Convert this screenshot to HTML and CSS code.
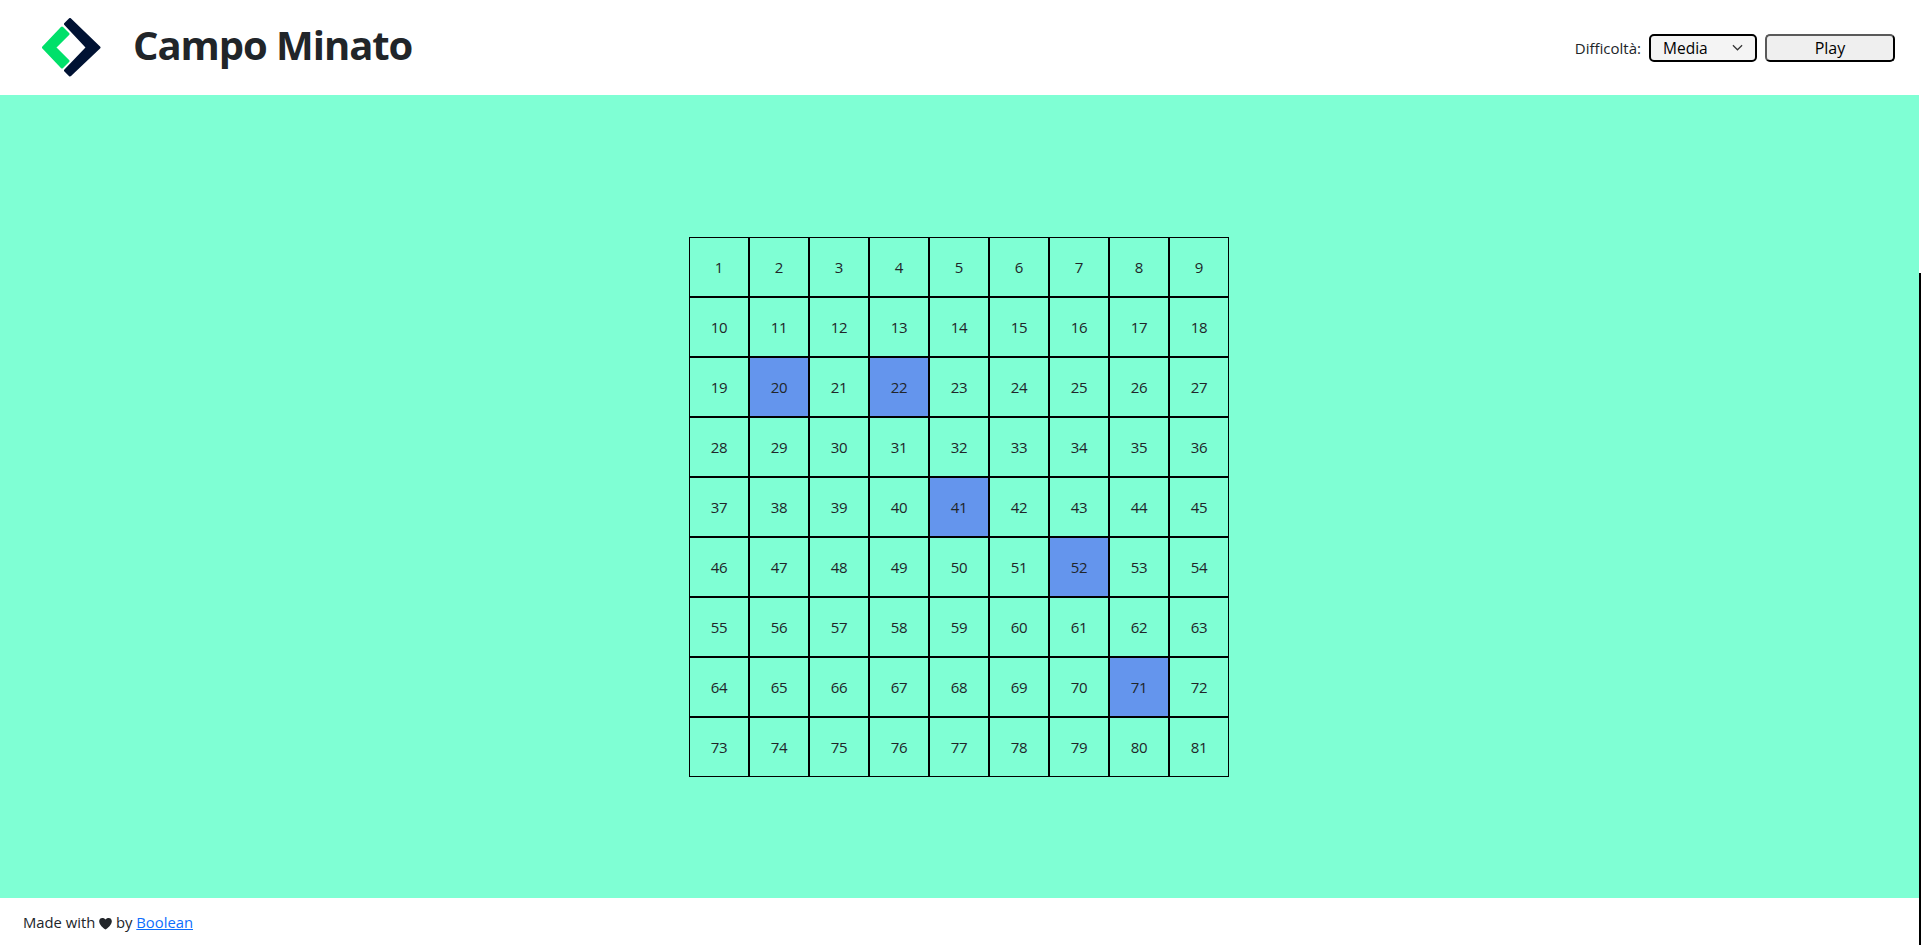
FILE: index.html
```html
<!DOCTYPE html>
<html lang="it">
<head>
<meta charset="utf-8">
<title>Campo Minato</title>
<link rel="stylesheet" href="styles.css">
</head>
<body>
<div class="page">
  <header class="header">
    <div class="brand">
      <svg class="logo" viewBox="0 0 59 59" width="59" height="59" aria-hidden="true">
        <polygon class="logo-green" points="20,10 26,16 12.5,29.5 26,43 20,49 1.5,29.5"/>
        <polygon class="logo-navy" points="28,1.5 57,29.5 28,57 23.5,52.5 45.5,29.5 23.5,6"/>
      </svg>
      <h1 class="title">Campo Minato</h1>
    </div>
    <div class="controls">
      <label class="label">Difficoltà:</label>
      <div class="select">
        <span>Media</span>
        <svg class="chevron" viewBox="0 0 12 7" width="11" height="7" aria-hidden="true"><path d="M1 1l5 5 5-5"/></svg>
      </div>
      <button class="play" type="button">Play</button>
    </div>
  </header>
  <main class="main">
    <div class="grid" id="grid"></div>
  </main>
  <footer class="footer">Made with <svg class="heart" viewBox="0 0 16 16" width="13" height="13" aria-hidden="true"><path d="M8 15.5C-6 6 2-2.500 8 3c6-5.500 14 3 0 12.500z"/></svg> by <a href="#">Boolean</a></footer>
  <div class="edge"></div>
</div>
<script src="grid.js"></script>
</body>
</html>
```
FILE: grid.js
```js
var blue = [20, 22, 41, 52, 71];
var grid = document.getElementById('grid');
for (var i = 1; i <= 81; i++) {
  var cell = document.createElement('div');
  cell.className = blue.indexOf(i) >= 0 ? 'cell cell-on' : 'cell';
  cell.textContent = i;
  grid.appendChild(cell);
}
```
FILE: styles.css
```css
* { box-sizing: border-box; }
html, body { margin: 0; height: 100%; overflow: hidden; }
body { font-family: "Open Sans", "Noto Sans", sans-serif; font-size: 16px; color: #212529; background: #fff; }
.page { position: relative; display: flex; flex-direction: column; height: 945px; width: 1921px; }
.header { height: 95px; display: flex; align-items: center; justify-content: space-between; padding: 0 26px 0 41px; }
.brand { display: flex; align-items: center; gap: 33px; }
.logo { display: block; margin: -1px 0 0 1px; }
.logo-green { fill: #00e06a; stroke: #00e06a; stroke-width: 3; stroke-linejoin: round; }
.logo-navy { fill: #001233; stroke: #001233; stroke-width: 3; stroke-linejoin: round; }
.title { margin: -6px 0 0 -1px; font-size: 40px; font-weight: 700; line-height: 48px; letter-spacing: -1.05px; }
.controls { display: flex; align-items: center; gap: 8px; font-size: 15px; }
.select { width: 108px; height: 28px; border: 2px solid #000; border-radius: 5px; background: #f4f4f4; display: flex; align-items: center; justify-content: space-between; padding: 0 12px; color: #000; font-size: 15.500px; }
.chevron path { fill: none; stroke: #333; stroke-width: 1.3; }
.play { width: 130px; height: 28px; border: 2px solid; border-color: #5a5a5a #000 #000 #5a5a5a; border-radius: 5px; background: #efefef; color: #000; font: inherit; font-size: 16px; font-weight: 500; padding: 0; }
.main { flex: 1; width: 1919px; background: #7fffd4; padding-top: 142px; display: flex; justify-content: center; align-items: flex-start; }
.grid { display: grid; grid-template-columns: repeat(9, 60px); grid-auto-rows: 60px; margin-left: -1px; }
.cell { border: 1px solid #000; display: flex; align-items: center; justify-content: center; font-size: 15px; letter-spacing: -0.3px; }
.cell-on { background: #6495ed; }
.footer { height: 47px; width: 1919px; padding: 13px 0 0 23px; font-size: 14.800px; line-height: 22px; }
.footer a { color: #0d6efd; }
.heart { fill: #212529; vertical-align: -2px; }
.edge { position: absolute; right: 0; top: 273px; bottom: 0; width: 2px; background: #000; }
```
